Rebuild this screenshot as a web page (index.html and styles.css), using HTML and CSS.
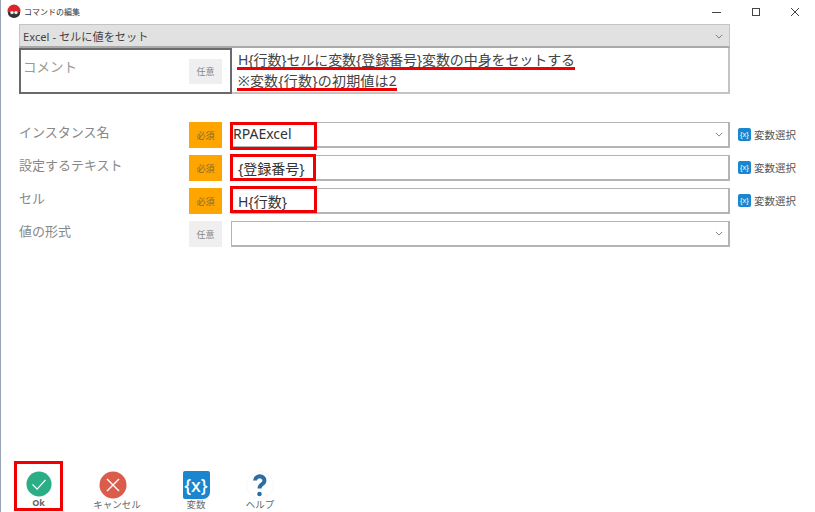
FILE: index.html
```html
<!DOCTYPE html>
<html lang="ja">
<head>
<meta charset="utf-8">
<title>コマンドの編集</title>
<link rel="stylesheet" href="styles.css">
</head>
<body>
<div class="window">
  <header class="titlebar">
    <svg class="app-icon" viewBox="0 0 14 14" width="14" height="14"><circle cx="7" cy="7" r="6.5" fill="#d8262c"/><path d="M1 8h12v1a6 5 0 0 1-12 0z" fill="#333"/><circle cx="5" cy="8.6" r="1.7" fill="#eee"/><circle cx="9" cy="8.6" r="1.7" fill="#eee"/></svg>
    <span class="title">コマンドの編集</span>
    <div class="controls">
      <svg viewBox="0 0 10 10" width="10" height="10"><path d="M0 5.5h9" stroke="#444" fill="none"/></svg>
      <svg viewBox="0 0 10 10" width="10" height="10"><rect x="1.5" y="1.5" width="7" height="7" stroke="#444" fill="none"/></svg>
      <svg viewBox="0 0 10 10" width="10" height="10"><path d="M1 1l8 8M9 1l-8 8" stroke="#444" fill="none"/></svg>
    </div>
  </header>

  <div class="main">
    <div class="command-select">
      <span>Excel - セルに値をセット</span>
      <svg class="chev" viewBox="0 0 10 6" width="8" height="5"><path d="M1 1l4 4 4-4" stroke="#666" fill="none"/></svg>
    </div>
    <div class="comment">
      <div class="comment-head">
        <span class="comment-label">コメント</span>
        <span class="badge optional">任意</span>
      </div>
      <div class="comment-body">
        <div class="line line1">H{行数}セルに変数{登録番号}変数の中身をセットする</div>
        <div class="line line2">※変数{行数}の初期値は2</div>
      </div>
    </div>

    <div class="fields">
      <div class="field">
        <span class="label">インスタンス名</span>
        <span class="badge required">必須</span>
        <div class="input"><span class="mark wide">RPAExcel</span><svg class="chev" viewBox="0 0 10 6" width="8" height="5"><path d="M1 1l4 4 4-4" stroke="#666" fill="none"/></svg></div>
        <div class="var-pick"><span class="x-icon">{x}</span>変数選択</div>
      </div>
      <div class="field">
        <span class="label">設定するテキスト</span>
        <span class="badge required">必須</span>
        <div class="input"><span class="mark second">{登録番号}</span></div>
        <div class="var-pick"><span class="x-icon">{x}</span>変数選択</div>
      </div>
      <div class="field">
        <span class="label">セル</span>
        <span class="badge required">必須</span>
        <div class="input"><span class="mark third">H{行数}</span></div>
        <div class="var-pick"><span class="x-icon">{x}</span>変数選択</div>
      </div>
      <div class="field">
        <span class="label">値の形式</span>
        <span class="badge optional">任意</span>
        <div class="input end"><svg class="chev" viewBox="0 0 10 6" width="8" height="5"><path d="M1 1l4 4 4-4" stroke="#666" fill="none"/></svg></div>
      </div>
    </div>
  </div>

  <footer class="toolbar">
    <div class="tool ok">
      <svg viewBox="0 0 28 28" width="28" height="28"><circle cx="14" cy="14" r="13.5" fill="#2bae85"/><path d="M7 14.5l5 5 9-10" stroke="#fff" stroke-width="1.4" fill="none"/></svg>
      <span class="ok-text">Ok</span>
    </div>
    <div class="tool cancel">
      <svg viewBox="0 0 28 28" width="28" height="28"><circle cx="14" cy="14" r="13.5" fill="#dc5c4c"/><path d="M8 8l12 12M20 8l-12 12" stroke="#fff" stroke-width="1.4" fill="none"/></svg>
      <span>キャンセル</span>
    </div>
    <div class="tool vars">
      <span class="vars-icon">{x}</span>
      <span>変数</span>
    </div>
    <div class="tool help">
      <svg viewBox="0 0 28 28" width="28" height="28"><circle cx="14" cy="14" r="13.5" fill="#fff" stroke="#f6f6f6"/><path d="M9 9.5a4.7 4.2 0 1 1 7.2 3.6c-1.9 1.3-2.7 2.1-2.7 4.4" stroke="#2b6ea4" stroke-width="4" fill="none"/><circle cx="13.5" cy="23" r="2.3" fill="#2b6ea4"/></svg>
      <span>ヘルプ</span>
    </div>
  </footer>
</div>
</body>
</html>
```
FILE: styles.css
```css
*, *::after { box-sizing: border-box; }
html, body { margin: 0; padding: 0; background: #fff; }
body { font-family: "Noto Sans", "Noto Sans CJK JP", sans-serif; color: #444; }
.window { width: 815px; height: 512px; display: flex; flex-direction: column; position: relative; overflow: hidden; border-left: 1px solid #9aa3b5; }

.titlebar { height: 24px; display: flex; align-items: center; padding-left: 6px; flex: none; }
.app-icon { flex: none; margin-top: -2px; }
.title { font-size: 8px; margin-left: 3px; margin-top: -2px; color: #333; }
.controls { margin-left: auto; display: flex; gap: 29px; padding-right: 15px; margin-top: -1px; }

.main { padding-left: 18px; width: 729px; flex: 1; }
.command-select { height: 24px; background: #e1e1e1; border: 1px solid #c4c4c4; border-bottom: 2px solid #a9a9a9; display: flex; align-items: center; justify-content: space-between; padding: 0 6px 0 3px; font-size: 11.2px; color: #444; }
.command-select .chev { margin-top: 2px; }

.comment { display: flex; height: 46px; }
.comment-head { width: 213px; border: 2px solid #6a6a6a; display: flex; justify-content: space-between; padding: 8px 8px 0 2px; flex: none; }
.comment-label { font-size: 13.5px; color: #999; line-height: 18px; }
.comment-head .badge { height: 25px; width: 33px; margin-top: 1px; }
.comment-body { flex: 1; border: 2px solid #c4c4c4; border-left: 0; border-top: 0; padding: 1px 0 0 6px; font-size: 14px; color: #444; }
.line { line-height: 21px; width: max-content; position: relative; }
.line1 { letter-spacing: -0.1px; }
.line2 { letter-spacing: 0.2px; }
.line1::after, .line2::after { content: ""; position: absolute; left: -1px; right: 0; height: 2.5px; background: #f00000; top: 18px; }

.fields { margin-top: 28px; display: flex; flex-direction: column; gap: 7px; }
.field { height: 26px; display: flex; align-items: center; position: relative; }
.label { width: 170px; font-size: 13px; color: #888; margin-top: -8px; flex: none; }
.badge { width: 33px; height: 26px; font-size: 9px; display: flex; align-items: center; justify-content: center; flex: none; }
.badge.required { background: #ffa500; color: #8a6a30; }
.badge.optional { background: #efefef; color: #888; }
.input { margin-left: 9px; flex: none; width: 499px; height: 100%; border: 1px solid #b4b4b4; border-width: 1px 2px 2px 1px; display: flex; align-items: center; justify-content: space-between; padding-right: 5px; font-size: 14px; color: #333; position: relative; }
.input.end { justify-content: flex-end; }
.chev { flex: none; }
.mark::after { content: ""; position: absolute; height: 27px; width: 87px; border: 3px solid #f00000; }
.mark.wide { padding-left: 1px; margin-top: -3px; }
.mark.wide::after { left: -2px; top: -1px; height: 28px; }
.mark.second, .mark.third { padding-left: 6px; }
.mark.second::after { left: -2px; top: -2px; width: 86px; }
.mark.third::after { left: -2px; top: -3px; }
.var-pick { position: absolute; left: 719px; top: 5px; display: flex; align-items: center; font-size: 10.5px; color: #555; gap: 3px; white-space: nowrap; }
.x-icon { width: 13px; height: 13px; background: #1a86d0; color: #fff; font-size: 7.5px; display: flex; align-items: center; justify-content: center; border-radius: 2px; font-family: "Liberation Sans", sans-serif; }

.toolbar { height: 50px; display: flex; flex: none; padding-left: 13px; }
.tool { display: flex; flex-direction: column; align-items: center; font-size: 9.5px; color: #666; line-height: 12px; padding-top: 9px; }
.tool svg { display: block; }
.ok { width: 49px; height: 50px; border: 3px solid #f00000; padding-top: 7px; margin-top: -1px; }
.ok-text { font-weight: 700; font-size: 9px; line-height: 11px; margin-top: 0; }
.cancel { width: 60px; margin-left: 24px; }
.cancel svg { margin-right: 8px; }
.vars { width: 30px; margin-left: 34px; }
.vars-icon { width: 27px; height: 28px; background: #1a86d0; border-radius: 2px 2px 7px 2px; color: #fff; font-size: 18px; font-weight: 500; display: flex; align-items: center; justify-content: center; line-height: 1; overflow: hidden; }
.help { width: 40px; margin-left: 29px; }
```
